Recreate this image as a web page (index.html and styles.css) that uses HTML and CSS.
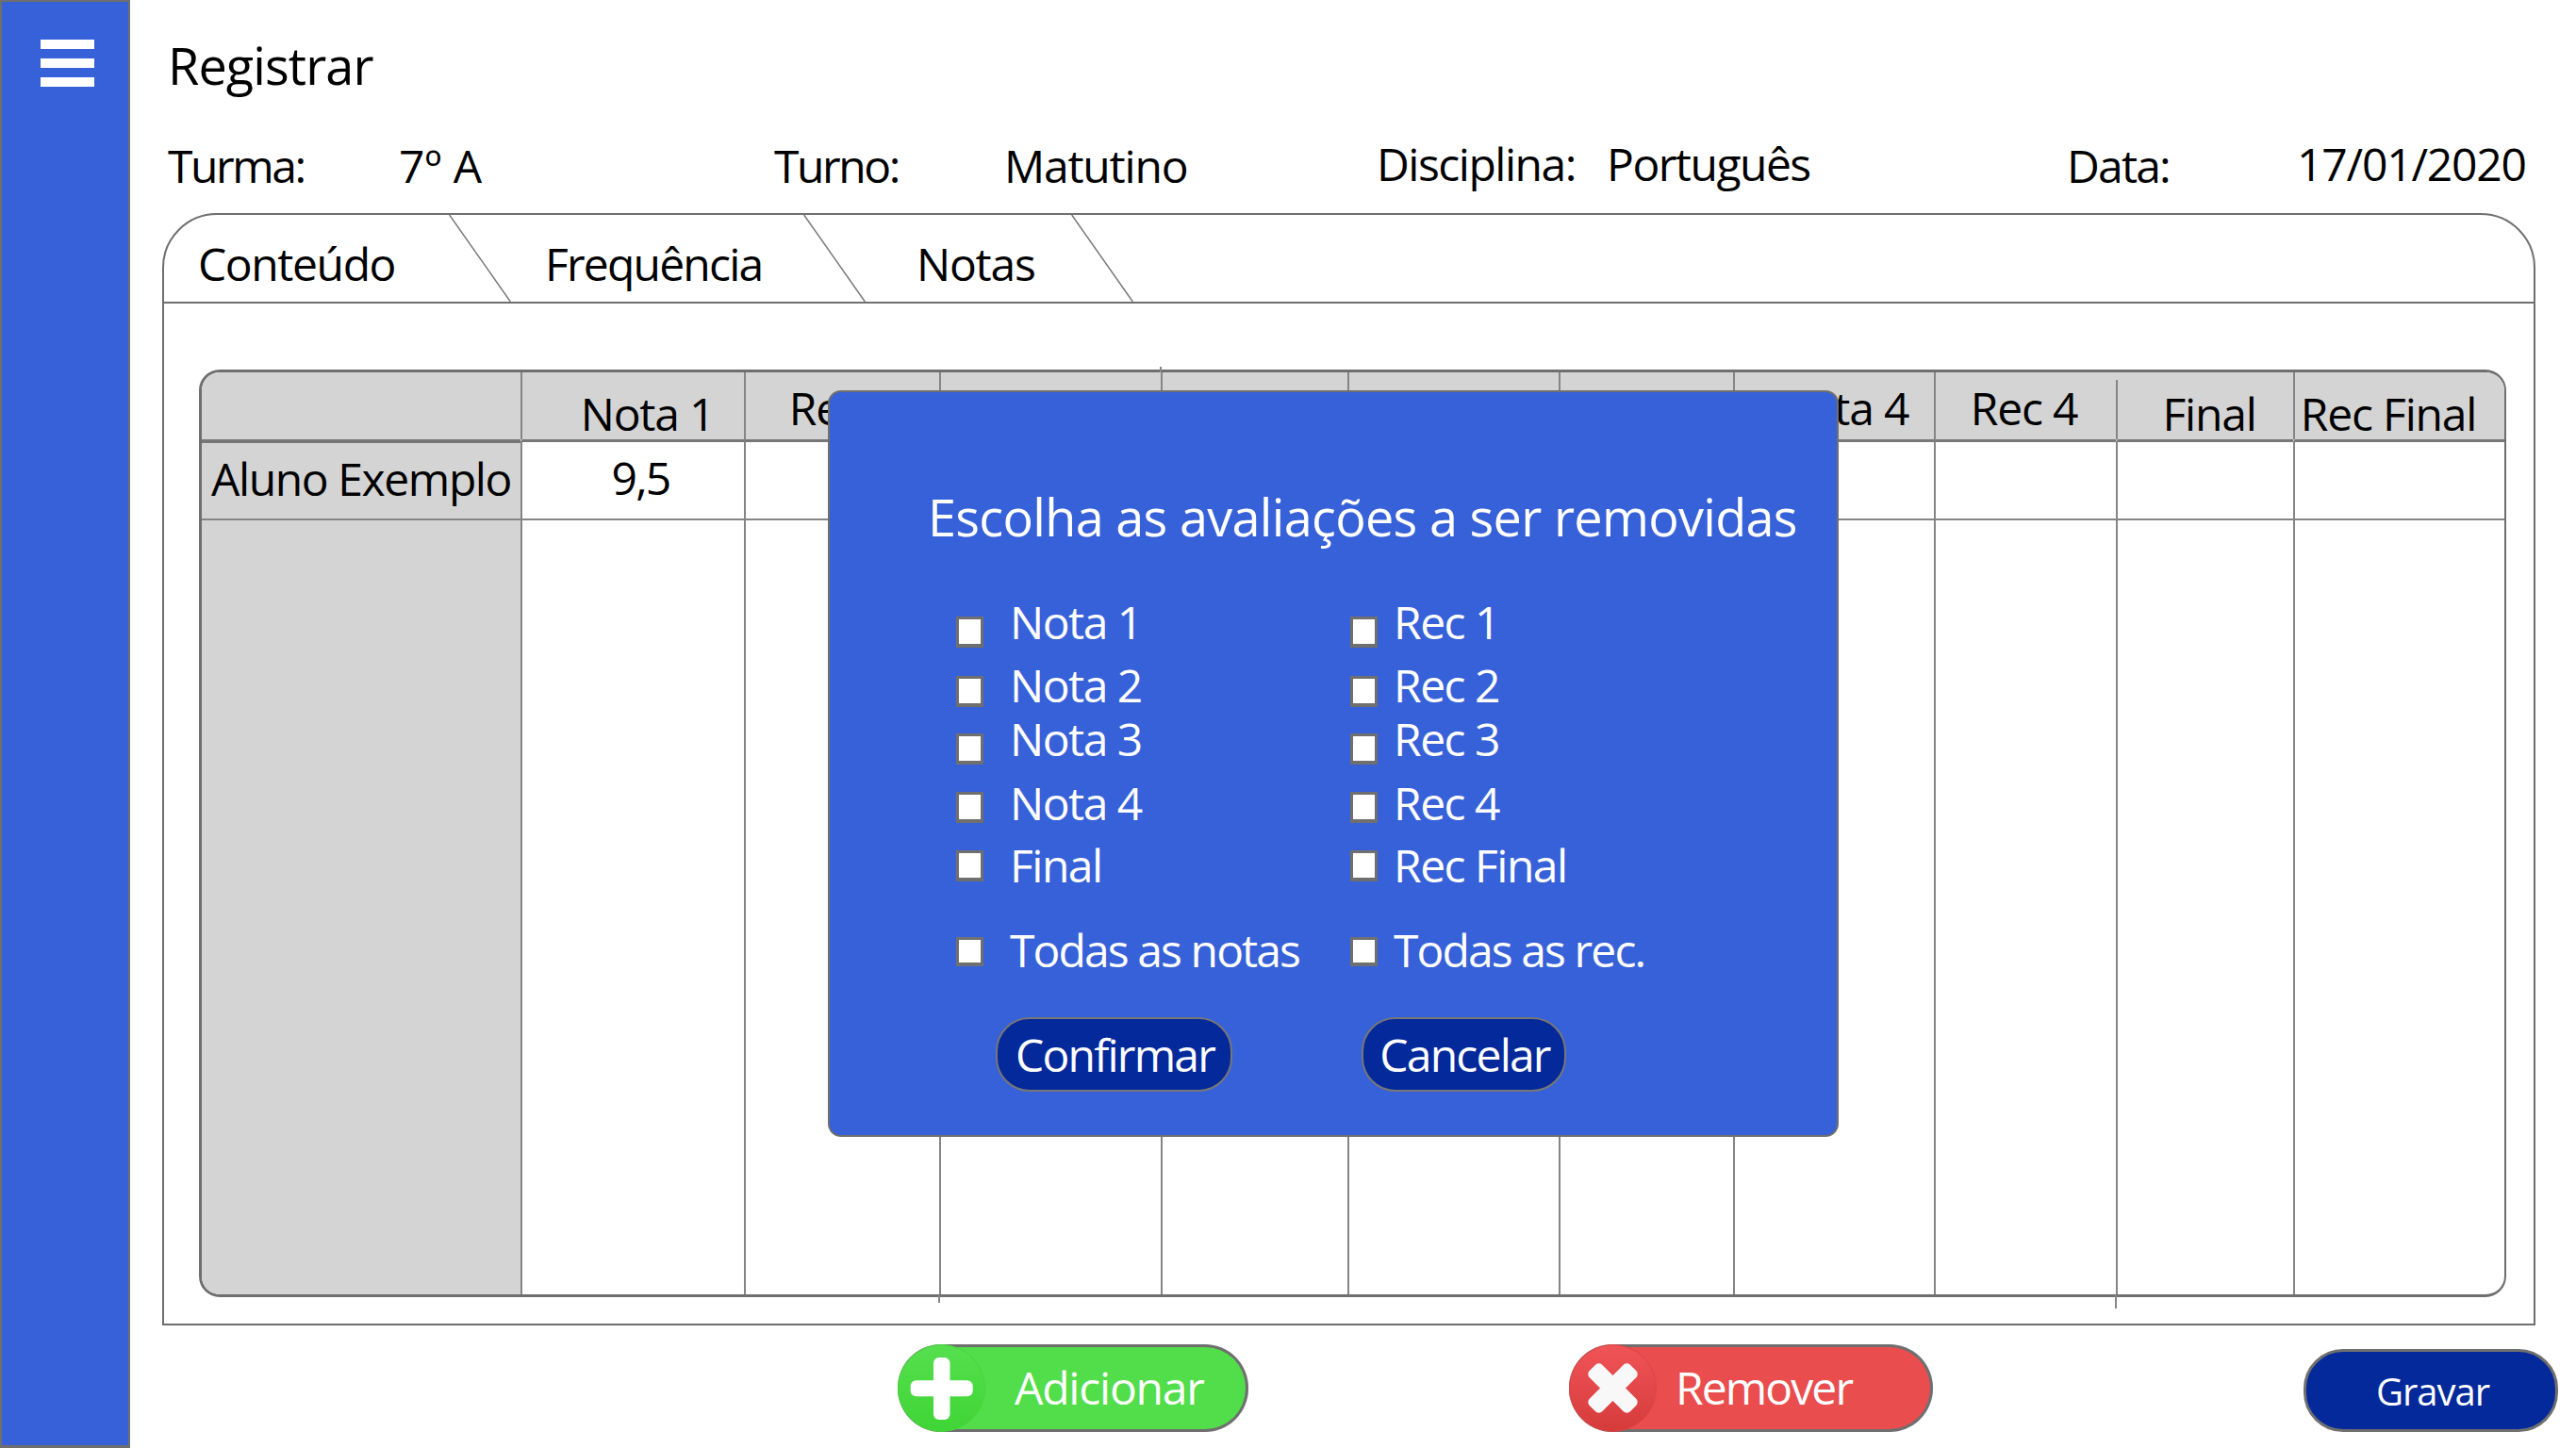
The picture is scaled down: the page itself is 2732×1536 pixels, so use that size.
FILE: index.html
```html
<!DOCTYPE html>
<html>
    <head>
        <title>Registrar</title>
        <link rel="stylesheet" href="styles.css">
    </head>
    <body>
        <div class="app">
            <aside class="sidebar">
                <div class="burger"><span></span><span></span><span></span></div>
            </aside>
            <main>
                <h1>Registrar</h1>
                <div class="meta">
                    <span class="squeeze">Turma:</span><span class="open">7º A</span>
                    <span class="squeeze">Turno:</span><span>Matutino</span>
                    <span class="up">Disciplina:</span><span class="up">Português</span>
                    <span class="squeeze-data">Data:</span><span class="up">17/01/2020</span>
                </div>
                <section class="panel">
                    <nav class="tabs">
                        <a class="tab tab1">Conteúdo</a>
                        <svg class="slash" viewBox="0 0 66 94"><line x1="0" y1="0" x2="66" y2="94"/></svg>
                        <a class="tab tab2">Frequência</a>
                        <svg class="slash" viewBox="0 0 66 94"><line x1="0" y1="0" x2="66" y2="94"/></svg>
                        <a class="tab tab3">Notas</a>
                        <svg class="slash" viewBox="0 0 66 94"><line x1="0" y1="0" x2="66" y2="94"/></svg>
                    </nav>
                    <div class="grades-wrap">
                        <div class="grades">
                            <div class="th side"></div>
                            <div class="th gap nudge-nota1">Nota 1</div>
                            <div class="th hi">Rec 1</div>
                            <div class="th">Nota 2</div>
                            <div class="th">Rec 2</div>
                            <div class="th">Nota 3</div>
                            <div class="th">Rec 3</div>
                            <div class="th gap hi nudge-nota4">Nota 4</div>
                            <div class="th hi nudge-rec4">Rec 4</div>
                            <div class="th gap-big nudge-final">Final</div>
                            <div class="th gap nudge-recfinal">Rec Final</div>

                            <div class="td side name">Aluno Exemplo</div>
                            <div class="td grade">9,5</div>
                            <div class="td"></div><div class="td"></div><div class="td"></div><div class="td"></div>
                            <div class="td"></div><div class="td"></div><div class="td"></div><div class="td"></div><div class="td"></div>

                            <div class="fill side"></div>
                            <div class="fill"></div><div class="fill"></div><div class="fill"></div><div class="fill"></div><div class="fill"></div>
                            <div class="fill"></div><div class="fill"></div><div class="fill"></div><div class="fill"></div><div class="fill"></div>
                        </div>
                        <i class="tick tick-top"></i>
                        <i class="tick tick-a"></i>
                        <i class="tick tick-b"></i>
                    </div>
                </section>
                <div class="actions">
                    <button class="btn add">
                        <svg class="knob" viewBox="0 0 93 93">
                            <defs>
                                <linearGradient id="green" x1="0" y1="0" x2="0" y2="1">
                                    <stop offset="0" stop-color="#56df4e"/>
                                    <stop offset="1" stop-color="#3fd535"/>
                                </linearGradient>
                            </defs>
                            <circle cx="46.5" cy="46.5" r="46" fill="url(#green)" stroke="#48d33f" stroke-width="1"/>
                            <rect x="38" y="14" width="17.5" height="66" rx="6" fill="#fff"/>
                            <rect x="13.7" y="38.3" width="66" height="17" rx="6" fill="#fff"/>
                        </svg>
                        <span>Adicionar</span>
                    </button>
                    <button class="btn remove">
                        <svg class="knob" viewBox="0 0 93 93">
                            <defs>
                                <linearGradient id="red" x1="0" y1="0" x2="0" y2="1">
                                    <stop offset="0" stop-color="#f05457"/>
                                    <stop offset="1" stop-color="#d63b3b"/>
                                </linearGradient>
                            </defs>
                            <circle cx="46.5" cy="46.5" r="46" fill="url(#red)" stroke="#dd4446" stroke-width="1"/>
                            <rect x="16" y="37" width="61" height="19" rx="5" fill="#f8f8f8" transform="rotate(45 46.5 46.5)"/>
                            <rect x="16" y="37" width="61" height="19" rx="5" fill="#f8f8f8" transform="rotate(-45 46.5 46.5)"/>
                        </svg>
                        <span>Remover</span>
                    </button>
                    <button class="btn save">Gravar</button>
                </div>
            </main>

            <div class="modal">
                <h2>Escolha as avaliações a ser removidas</h2>
                <div class="opts">
                    <div class="opt r1"><i class="box"></i><label>Nota 1</label></div>
                    <div class="opt r1"><i class="box"></i><label>Rec 1</label></div>
                    <div class="opt r2"><i class="box"></i><label>Nota 2</label></div>
                    <div class="opt r2"><i class="box"></i><label>Rec 2</label></div>
                    <div class="opt r3"><i class="box"></i><label>Nota 3</label></div>
                    <div class="opt r3"><i class="box"></i><label>Rec 3</label></div>
                    <div class="opt r4"><i class="box"></i><label>Nota 4</label></div>
                    <div class="opt r4"><i class="box"></i><label>Rec 4</label></div>
                    <div class="opt r5"><i class="box"></i><label>Final</label></div>
                    <div class="opt r5"><i class="box"></i><label>Rec Final</label></div>
                    <div class="opt r6"><i class="box"></i><label>Todas as notas</label></div>
                    <div class="opt r6"><i class="box"></i><label>Todas as rec.</label></div>
                </div>
                <div class="modal-actions">
                    <button class="pill confirm">Confirmar</button>
                    <button class="pill cancel">Cancelar</button>
                </div>
            </div>
        </div>
    </body>
</html>
```

FILE: styles.css
```css
* {
    box-sizing: border-box;
}
body {
    margin: 0;
    background: #fff;
    color: #000;
    font-family: "Open Sans", "Noto Sans", sans-serif;
    font-size: 48px;
    letter-spacing: -1.2px;
}
.app {
    position: relative;
    display: flex;
    width: 2732px;
    height: 1536px;
    overflow: hidden;
}
.sidebar {
    flex: 0 0 138px;
    background: #3761d8;
    border: 2px solid #6f6f6f;
    border-width: 2px 2px 3px 2px;
    padding: 40px 0 0 41px;
}
.burger span {
    display: block;
    width: 57px;
    height: 10px;
    margin-bottom: 10px;
    background: #fff;
}
main {
    flex: 1;
    padding: 0 0 0 34px;
}
h1 {
    margin: 0;
    padding: 34px 0 0 6px;
    height: 130px;
    font-size: 54px;
    font-weight: 400;
    line-height: 70px;
    letter-spacing: -0.9px;
}
.meta {
    display: grid;
    grid-template-columns: 245px 398px 244px 395px 244px 489px 243px auto;
    height: 96px;
    padding: 15px 0 0 6px;
    line-height: 62px;
}
.meta .up {
    margin-top: -2px;
    letter-spacing: -1.5px;
}
.meta .up:last-child {
    letter-spacing: -1.2px;
}
.meta .squeeze {
    letter-spacing: -2.4px;
}
.meta .squeeze-data {
    margin-left: -1px;
    letter-spacing: -1.8px;
}
.meta .open {
    letter-spacing: 0;
}
.panel {
    width: 2517px;
    height: 1180px;
    border: 2px solid #6f6f6f;
    border-radius: 58px 58px 0 0;
}
.tabs {
    display: flex;
    height: 94px;
    border-bottom: 2px solid #6f6f6f;
}
.tab {
    line-height: 104px;
}
.tab1 {
    width: 302px;
    padding-left: 36px;
    letter-spacing: -1.4px;
}
.tab2 {
    width: 310px;
    padding-left: 36px;
    letter-spacing: -1.8px;
}
.tab3 {
    width: 218px;
    padding-left: 54px;
}
.slash {
    width: 66px;
    height: 92px;
    flex: none;
}
.slash line {
    stroke: #777;
    stroke-width: 1.5;
}
.grades-wrap {
    position: relative;
    margin: 70px 0 0 37px;
    width: 2447px;
}
.grades {
    display: grid;
    grid-template-columns: 338px 237px 207px 235px 198px 224px 185px 213px 193px 188px 224px;
    grid-template-rows: 74px 83px 821px;
    height: 984px;
    border: 3px solid #6f6f6f;
    border-right-width: 2px;
    border-radius: 22px;
    overflow: hidden;
}
.th, .td, .fill {
    position: relative;
    border-left: 2px solid #858585;
}
.th {
    background: #d4d4d4;
    border-bottom: 3px solid #777;
    padding-top: 14px;
    text-align: center;
    line-height: 60px;
    white-space: nowrap;
}
.td {
    border-bottom: 2px solid #858585;
    text-align: center;
    line-height: 76px;
}
.side {
    background: #d4d4d4;
    border-left: 0;
}
.name {
    padding-left: 10px;
    text-align: left;
    white-space: nowrap;
    border-top: 1px solid #777;
    letter-spacing: -1.4px;
}
.grade {
    padding-left: 16px;
    letter-spacing: -1.8px;
}
.th.hi {
    padding-top: 8px;
}
.nudge-nota1 {
    padding-left: 30px;
}
.nudge-nota4 {
    padding-left: 16px;
}
.nudge-rec4 {
    padding-right: 4px;
}
.nudge-final {
    padding-left: 8px;
}
.nudge-recfinal {
    padding-right: 24px;
}
.th.gap, .th.gap-big {
    border-left-color: #d4d4d4;
}
.th.gap::before, .th.gap-big::before {
    content: "";
    position: absolute;
    left: -2px;
    top: 0;
    bottom: 0;
    width: 2px;
    background: #858585;
}
.th.gap-big::before {
    top: 8px;
}
.tick {
    position: absolute;
    width: 2px;
    background: #858585;
}
.tick-top {
    left: 1019px;
    top: -3px;
    height: 6px;
}
.tick-a {
    left: 784px;
    bottom: -6px;
    height: 8px;
}
.tick-b {
    left: 2032px;
    bottom: -12px;
    height: 14px;
}
.actions {
    height: 130px;
    display: flex;
    align-items: flex-start;
    padding-top: 20px;
}
.btn {
    display: flex;
    align-items: center;
    height: 93px;
    padding: 0;
    border: 3px solid #6f6f6f;
    border-left: 0;
    border-radius: 46px;
    color: #fff;
    font: inherit;
    letter-spacing: inherit;
}
.btn span {
    margin-top: -3px;
}
.knob {
    flex: none;
    width: 93px;
    height: 93px;
    margin: -3px 0;
}
.add {
    width: 372px;
    margin-left: 780px;
    background: #52dd4a;
}
.add span {
    margin-left: 31px;
}
.remove {
    width: 386px;
    margin-left: 340px;
    background: #ea4d4d;
}
.remove span {
    margin-left: 20px;
    letter-spacing: -1.9px;
}
.save {
    justify-content: center;
    width: 270px;
    height: 88px;
    margin: 5px 0 0 393px;
    padding-left: 4px;
    border-left: 3px solid #6f6f6f;
    border-radius: 42px;
    background: #03299b;
    font-size: 40px;
    letter-spacing: -1px;
}
.modal {
    position: absolute;
    left: 878px;
    top: 414px;
    width: 1072px;
    height: 792px;
    padding: 97px 0 0 108px;
    background: #3761d8;
    border: 2px solid #6f6f6f;
    border-radius: 14px;
    color: #fff;
}
.modal h2 {
    margin: 0 0 71px -4px;
    font-size: 54px;
    font-weight: 400;
    line-height: 70px;
    letter-spacing: -0.7px;
    white-space: nowrap;
}
.opts {
    display: grid;
    grid-template-columns: 418px auto;
    margin-left: 26px;
    letter-spacing: -1.5px;
}
.opt {
    display: flex;
    height: 62px;
}
.r1 {
    height: 63px;
}
.r2 {
    height: 61px;
}
.r6 {
    height: 92px;
    margin-top: 30px;
}
.box {
    flex: none;
    width: 29px;
    height: 33px;
    margin-right: 28px;
    background: #fff;
    border: 3px solid #6f6f6f;
    border-bottom-width: 4px;
}
.r6 .box {
    height: 31px;
}
.opts label {
    line-height: 62px;
    white-space: nowrap;
}
.r1 label, .r3 label {
    margin-top: -25px;
}
.r2 label {
    margin-top: -21px;
}
.r4 label {
    margin-top: -19px;
}
.r5 label {
    margin-top: -15px;
}
.r6 label {
    margin-top: -17px;
    letter-spacing: -1.9px;
}
.opts .opt:nth-child(even) .box {
    margin-right: 17px;
}
.modal-actions {
    display: flex;
    margin: -7px 0 0 68px;
}
.pill {
    height: 79px;
    padding: 0 0 0 2px;
    background: #03299b;
    border: 2px solid #777;
    border-radius: 36px;
    color: #fff;
    font: inherit;
    letter-spacing: -1.8px;
}
.confirm {
    width: 251px;
    margin-right: 137px;
}
.cancel {
    width: 217px;
}
```
